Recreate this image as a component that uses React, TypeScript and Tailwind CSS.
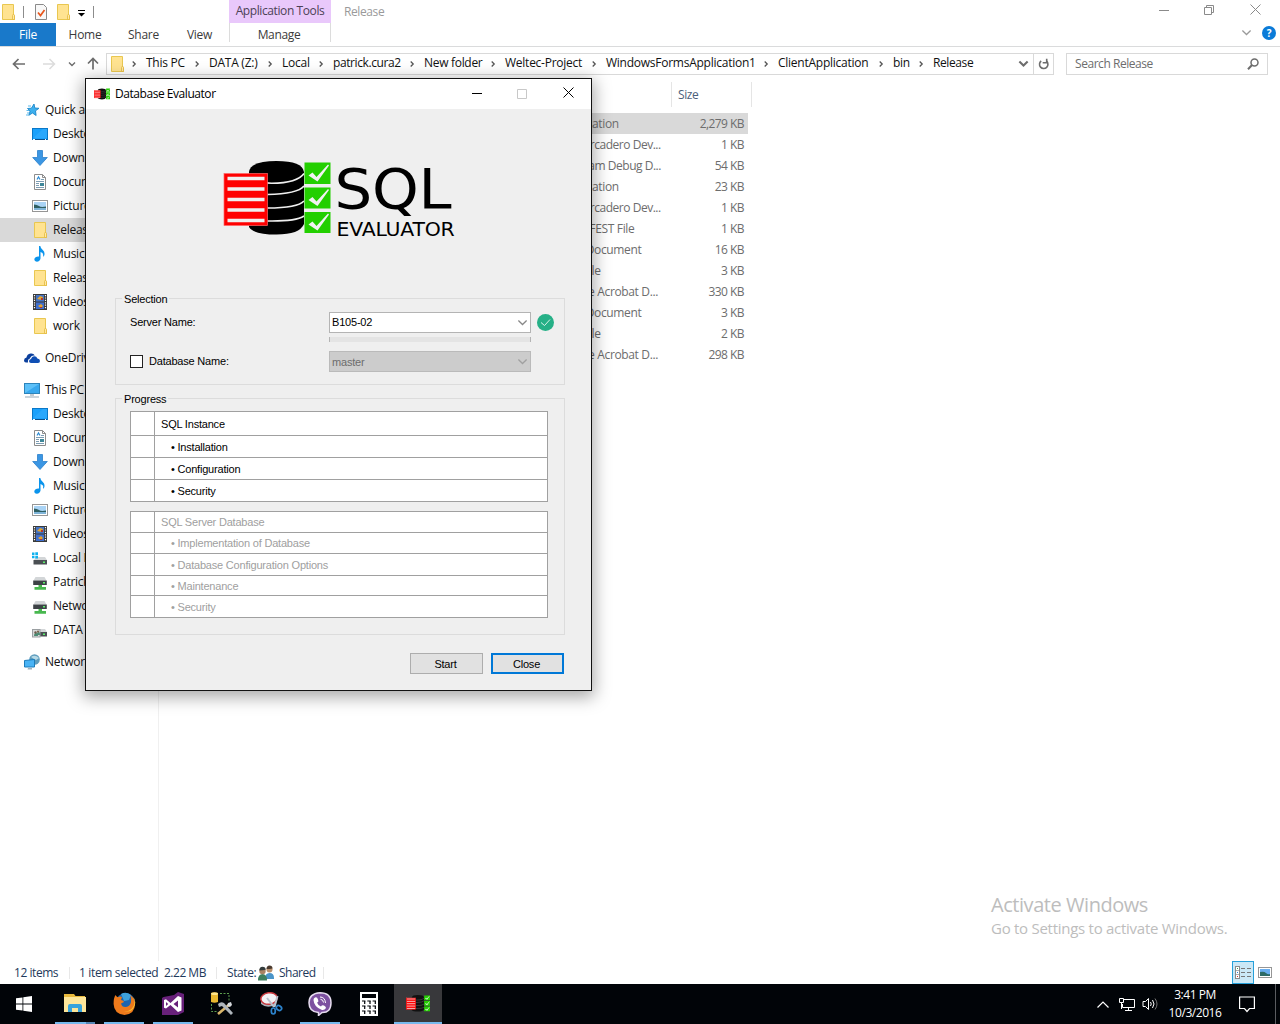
import React from "react";

type IconProps = { className?: string };

function Folder({ className = "" }: IconProps) {
  return (
    <svg className={"shrink-0 " + className} width="16" height="18" viewBox="0 0 16 18">
      <path d="M2.500 1.500h11v10l1 1v4h-12z" fill="#ffe391" stroke="#e9c750" />
      <path d="M12.500 16.500v-4l1-1.500 1 1.500v4z" fill="#ffe9a6" stroke="#e3b93c" strokeWidth=".8" />
    </svg>
  );
}

function Star() {
  return (
    <svg width="16" height="16" viewBox="0 0 16 16">
      <path d="M10 2l.8 4 4.200.3-3.500 2.500.6 4.700-3.600-2.500-3.700 2.300 1.300-4.300L3.500 6.500l3.900-.3z" fill="#3db0ee" stroke="#1b87cb" strokeWidth=".9" />
      <path d="M4 4h3M2.500 8.500H5M3 11h2M2 13h2.500" stroke="#5db9ea" />
    </svg>
  );
}
function Desktop() {
  return (
    <svg width="16" height="16" viewBox="0 0 16 16">
      <rect x=".5" y="2.500" width="15" height="11" fill="#1ba1fb" stroke="#0a78c8" />
      <path d="M1 12L11 3h4v9z" fill="#3fb2ff" opacity=".45" />
      <path d="M1 13.500h14" stroke="#0b4f8c" />
      <path d="M1 13.500h2M13 13.500h1" stroke="#fff" />
    </svg>
  );
}
function Download() {
  return (
    <svg width="16" height="16" viewBox="0 0 16 16">
      <path d="M5.500.5h5v7h4.800L8 15.500.7 7.500h4.800z" fill="#3b96e3" stroke="#2b80cb" strokeWidth=".8" />
    </svg>
  );
}
function Doc() {
  return (
    <svg width="16" height="16" viewBox="0 0 16 16">
      <path d="M2.500.5h8l3 3v12h-11z" fill="#fff" stroke="#8c8c8c" />
      <path d="M10.500.5v3h3" fill="none" stroke="#8c8c8c" />
      <path d="M5 5.500l1.500-2.500L8 5.500" fill="none" stroke="#2a8ad4" strokeWidth="1.200" />
      <path d="M9 5.500h3M4 7.500h8M4 9.500h3M4 11.500h3M4 13.500h8" stroke="#7d9db3" />
      <rect x="8" y="9" width="4" height="3" fill="#3f8799" />
    </svg>
  );
}
function Picture() {
  return (
    <svg width="16" height="16" viewBox="0 0 16 16">
      <rect x=".5" y="2.500" width="15" height="11" fill="#fff" stroke="#969696" />
      <rect x="2" y="4" width="12" height="8" fill="#a9d3f5" />
      <path d="M2 6.500q3 0 5 1.500t7 .5v1.500H2z" fill="#2f5f62" />
      <path d="M2 10h12v2H2z" fill="#7fb4d8" />
    </svg>
  );
}
function Music() {
  return (
    <svg width="16" height="16" viewBox="0 0 16 16">
      <path d="M7 0h1.300q.3 2.500 2.700 4.300 2.600 2.400.8 6.200l-.8-.3q1-3.200-2.500-4.200V12.500q-.5 3-3.700 3.200-2.600-.2-2.500-2.500.8-3 4.700-2.700z" fill="#0b94ec" />
    </svg>
  );
}
function Video() {
  return (
    <svg width="16" height="16" viewBox="0 0 16 16">
      <rect x="1" y="0" width="14" height="16" fill="#3a3a3a" />
      <path d="M2.500 1v14M13.500 1v14" stroke="#fff" strokeWidth="1.200" strokeDasharray="1.200 1.200" />
      <rect x="4" y="1" width="8" height="6.500" fill="#4474c4" />
      <rect x="4" y="8.500" width="8" height="6.500" fill="#3f6fd0" />
      <path d="M5 5l3-3 3 1-1 3zM6 12l3-2 2 2-2 2z" fill="#e5a52c" />
      <path d="M9 4h2v2H9zM8 13h2v1H8z" fill="#b5382c" />
    </svg>
  );
}
function OneDrive() {
  return (
    <svg width="16" height="16" viewBox="0 0 16 16">
      <path d="M0 10.500Q0 8 2.500 7.500 3 4 6.500 3.500 9.500 3 10.800 5.500 7 5 6 8.500 3.500 9 4 12.500H2Q0 12.300 0 10.500z" fill="#0b3f9c" />
      <path d="M5 11.300Q5 9.300 7 9q.8-3 3.500-2.700 2 0 2.900 2.200 2.600.4 2.600 2.400T14 13H7q-1.900 0-2-1.700z" fill="#0f4fb4" />
    </svg>
  );
}
function Monitor() {
  return (
    <svg width="16" height="16" viewBox="0 0 16 16">
      <rect x=".5" y="1.500" width="15" height="10" fill="#5cc0f8" stroke="#2c84bb" />
      <path d="M1 11L15 2v9z" fill="#38a8ee" />
      <path d="M6 12h4v2H6z" fill="#c3ccd2" />
      <path d="M1 15h14" stroke="#94a9b8" />
    </svg>
  );
}
function Drive({ kind }: { kind: "local" | "net" | "share" }) {
  return (
    <svg width="16" height="16" viewBox="0 0 16 16">
      {kind === "net" ? (
        <>
          <path d="M3.500 3h9l2 3.500h-13z" fill="#d3d6d8" />
          <rect x="1.200" y="6.500" width="13.600" height="4.500" fill="#3d4246" />
          <rect x="11" y="8" width="2" height="1.500" fill="#5cf06c" />
          <path d="M6.500 11h3.500v2h4v2.800H2.500V13h4z" fill="#48b84f" />
        </>
      ) : (
        <>
          <path d="M4 7h9l2 3H2z" fill="#d3d6d8" />
          <rect x="1.500" y="10" width="13.500" height="4.500" fill="#4a4f53" />
          <rect x="11" y="11.500" width="2" height="1.500" fill="#5cf06c" />
          {kind === "local" ? (
            <path d="M0 2.500h2.500V5H0zM3.300 2.200h2.700v2.800h-2.700zM0 5.800h2.500v2.500H0zM3.300 5.800h2.700v2.700h-2.700z" fill="#10b1ee" />
          ) : (
            <>
              <rect x=".5" y="7.500" width="7.500" height="7.500" fill="#d7d9da" stroke="#9a9fa2" />
              <path d="M2 14q0-3 2-3t2 3zM5 13q0-3 1.500-3T8 13z" fill="#4b8a72" />
              <circle cx="3.500" cy="10.500" r="1.200" fill="#6b5a4a" />
              <circle cx="6" cy="9.600" r="1.100" fill="#7c6550" />
            </>
          )}
        </>
      )}
    </svg>
  );
}
function Network() {
  return (
    <svg width="16" height="16" viewBox="0 0 16 16">
      <circle cx="10.500" cy="5.500" r="5.300" fill="#5f9dbd" />
      <path d="M7 3q4-3 8 1l-3 2-2-1z" fill="#b6d9e6" />
      <path d="M.5 6.500l10-1v7.500H.5z" fill="#49b3f5" stroke="#1d7cba" />
      <path d="M4 14h4v1.500H3.500z" fill="#9fb2bd" />
    </svg>
  );
}

function Logo({ mini = false }: { mini?: boolean }) {
  return (
    <g>
      <path d="M25.500 11Q27 0 53 0T80.500 11V63Q76 73.500 53 73.500T25.500 66z" fill={mini ? "#111" : "#000"} />
      <g fill="none" stroke="#efefef" strokeWidth={mini ? 0.8 : 1.600}>
        <path d="M25.500 14Q33 22 48 22.300 74 22 80.500 12.500" />
        <path d="M44 33.500Q74 33 80.500 25" />
        <path d="M44 47Q74 47 80.500 40" />
        <path d="M44 60Q72 60.500 80.500 55" />
      </g>
      <rect x=".5" y="12.500" width="43.500" height="52" fill="#f00" stroke="#f66" strokeWidth=".7" />
      <path d="M4 17.500h37M4 28h37M4 38.500h37M4 49h37M4 59.500h37" stroke="#efefef" strokeWidth="3.400" />
      <path d="M81 1.500h26v21.500h-26zM81 26.500h26v21h-26zM81 51h26v21h-26z" fill="#23cf00" />
      <g fill="#f2f2f2">
        <path d="M85 14.500l4-3 4 4.500L104.500 3.500l1 1L94 20.500z" />
        <path d="M85 39l4-3 4 4.500L104.500 28l1 1L94 45z" />
        <path d="M85 63.500l4-3 4 4.500L104.500 52.500l1 1L94 69.500z" />
      </g>
    </g>
  );
}

function Chevron({ className = "", w = 8, sw = 1.200, dir = "down" }: { className?: string; w?: number; sw?: number; dir?: "down" | "right" }) {
  const d = dir === "down" ? "M1 2.500l3 3 3-3" : "M2.700 1.500L5.200 4 2.700 6.500";
  return (
    <svg className={"shrink-0 " + className} width={w} height={w} viewBox="0 0 8 8">
      <path d={d} fill="none" stroke="currentColor" strokeWidth={sw} />
    </svg>
  );
}

const crumbs: [string, string][] = [
  ["This PC", "w-[40px]"],
  ["DATA (Z:)", "w-[50px]"],
  ["Local", "w-[28px]"],
  ["patrick.cura2", "w-[68px] tracking-[-0.4px]"],
  ["New folder", "w-[58px] tracking-[-0.3px]"],
  ["Weltec-Project", "w-[78px]"],
  ["WindowsFormsApplication1", "w-[149px]"],
  ["ClientApplication", "w-[92px]"],
  ["bin", "w-[17px]"],
  ["Release", "w-[40px] tracking-[-0.4px]"],
];

function Ribbon() {
  return (
    <header className="h-[47px] shrink-0 border-b border-[#dadbdc] flex">
      <div className="w-[229px] flex flex-col">
        <div className="h-[23px] flex items-center">
          <Folder className="mr-[6px]" />
          <span className="w-px h-3 bg-[#8c8c8c] ml-[1px] mr-[10px]" />
          <svg width="14" height="17" viewBox="0 0 14 17" className="mt-px">
            <path d="M1.500.5h8l3 3v12h-11z" fill="#f8f8f8" stroke="#8a8a8a" />
            <path d="M4 8.500l2.500 3L10.500 6" fill="none" stroke="#e8561c" strokeWidth="1.700" />
          </svg>
          <Folder className="ml-[7px]" />
          <svg width="9" height="7" viewBox="0 0 9 7" className="ml-[6px] mt-[3px]"><path d="M1 .5h7" stroke="#000" /><path d="M1 3h7L4.500 6.500z" /></svg>
          <span className="w-px h-3 bg-[#8c8c8c] ml-[7px]" />
        </div>
        <nav className="flex h-[23px] leading-[24px] text-[#3b3b3b]">
          <span className="w-14 text-center bg-[#1979ca] text-white">File</span>
          <span className="w-[58px] text-center">Home</span>
          <span className="w-[59px] text-center">Share</span>
          <span className="w-[53px] text-center">View</span>
        </nav>
      </div>
      <div className="w-[102px] flex flex-col text-center text-[#3b3b3b]">
        <div className="h-[23px] leading-[21px] bg-[#e9c8fb] text-[#4c4256] whitespace-nowrap tracking-[-0.4px]">Application Tools</div>
        <div className="h-[19px] leading-[24px] border-x border-[#dcdcdc] pr-0.5 tracking-[-0.35px]">Manage</div>
      </div>
      <div className="pl-[13px] leading-[24px] h-[23px] text-[#9a9a9a] tracking-[-0.4px]">Release</div>
      <div className="ml-auto flex flex-col">
        <div className="flex h-[20px] items-center text-[#8a8a8a]">
          <svg width="10" height="10" viewBox="0 0 10 10" className="mr-[35px]"><path d="M0 5.500h10" stroke="currentColor" /></svg>
          <svg width="10" height="10" viewBox="0 0 10 10" className="mr-[36px]" fill="none" stroke="currentColor"><path d="M.5 2.500h7v7h-7zM2.500 2.500v-2h7v7h-2" /></svg>
          <svg width="11" height="11" viewBox="0 0 11 11" className="mr-[19px]" stroke="currentColor"><path d="M.5.5l10 10M10.500.5l-10 10" /></svg>
        </div>
        <div className="flex h-7 items-center justify-end pr-1">
          <Chevron w={11} sw={0.9} className="text-[#9a9a9a] mr-[10px]" />
          <span className="size-[14px] rounded-full bg-[#0b7bd8] text-white text-[10px] font-bold leading-[14px] text-center">?</span>
        </div>
      </div>
    </header>
  );
}

function AddressBar() {
  return (
    <div className="h-[33px] shrink-0 flex items-center">
      <svg width="14" height="12" viewBox="0 0 14 12" className="ml-[12px]" fill="none" stroke="#6d6d6d" strokeWidth="1.700"><path d="M13 6H2M6.500 1L1.500 6l5 5" /></svg>
      <svg width="14" height="12" viewBox="0 0 14 12" className="ml-[16px]" fill="none" stroke="#dcdcdc" strokeWidth="1.500"><path d="M1 6h11M7.500 1l5 5-5 5" /></svg>
      <Chevron w={8} className="ml-[12px] mr-px text-[#6d6d6d]" sw={1.400} />
      <svg width="12" height="13" viewBox="0 0 12 13" className="ml-[10px]" fill="none" stroke="#6d6d6d" strokeWidth="1.700"><path d="M6 12.500V2M1 6.500l5-5 5 5" /></svg>
      <div className="ml-[7px] w-[948px] h-[22px] border border-[#d9d9d9] flex items-center text-[#111]">
        <Folder className="ml-[2px] -mr-[2px]" />
        {crumbs.map(([t, w]) => (
          <React.Fragment key={t}>
            <Chevron dir="right" className="ml-[7px] mr-[8px] text-[#555]" sw={1.300} />
            <span className={w + " whitespace-nowrap leading-[18px] -mt-px"}>{t}</span>
          </React.Fragment>
        ))}
        <Chevron w={11} sw={1.500} className="ml-auto mr-[4px] text-[#6d6d6d]" />
        <div className="w-5 h-full border-l border-[#d9d9d9] flex items-center justify-center">
          <svg width="12" height="12" viewBox="0 0 12 12" fill="none" stroke="#6d6d6d" strokeWidth="1.600"><path d="M8.500 3.200A4.200 4.200 0 1 1 3.200 3" /><path d="M5 5h4V1" transform="translate(-.3 -.2)" /></svg>
        </div>
      </div>
      <div className="ml-[12px] w-[202px] h-[22px] border border-[#d9d9d9] flex items-center justify-between pl-2 pr-2 text-[#6d6d6d]">
        <span className="tracking-[-0.45px]">Search Release</span>
        <svg width="12" height="12" viewBox="0 0 12 12" fill="none" stroke="#6d6d6d"><circle cx="7.500" cy="4.500" r="3.500" strokeWidth="1.500" /><path d="M5 7L1 11.200" strokeWidth="2" /></svg>
      </div>
    </div>
  );
}

type Item = { t: string; i: React.ReactNode; sub?: boolean; sel?: boolean };
const groups: Item[][] = [
  [
    { t: "Quick access", i: <Star /> },
    { t: "Desktop", i: <Desktop />, sub: true },
    { t: "Downloads", i: <Download />, sub: true },
    { t: "Documents", i: <Doc />, sub: true },
    { t: "Pictures", i: <Picture />, sub: true },
    { t: "Release", i: <Folder />, sub: true, sel: true },
    { t: "Music", i: <Music />, sub: true },
    { t: "Release", i: <Folder />, sub: true },
    { t: "Videos", i: <Video />, sub: true },
    { t: "work", i: <Folder />, sub: true },
  ],
  [{ t: "OneDrive", i: <OneDrive /> }],
  [
    { t: "This PC", i: <Monitor /> },
    { t: "Desktop", i: <Desktop />, sub: true },
    { t: "Documents", i: <Doc />, sub: true },
    { t: "Downloads", i: <Download />, sub: true },
    { t: "Music", i: <Music />, sub: true },
    { t: "Pictures", i: <Picture />, sub: true },
    { t: "Videos", i: <Video />, sub: true },
    { t: "Local Disk", i: <Drive kind="local" />, sub: true },
    { t: "Patrick", i: <Drive kind="net" />, sub: true },
    { t: "Network", i: <Drive kind="net" />, sub: true },
    { t: "DATA (Z:)", i: <Drive kind="share" />, sub: true },
  ],
  [{ t: "Network", i: <Network /> }],
];

function Sidebar() {
  return (
    <aside className="w-[159px] border-r border-[#f0f0f0] pt-[18px] flex flex-col gap-2 text-[#111]">
      {groups.map((g, k) => (
        <div key={k}>
          {g.map((it, j) => (
            <div
              key={j}
              className={"h-6 flex items-center gap-[5px] leading-6 " + (it.sub ? "pl-8 " : "pl-6 ") + (it.sel ? "bg-[#d9d9d9]" : "")}
            >
              {it.i}
              <span className="whitespace-nowrap">{it.t}</span>
            </div>
          ))}
        </div>
      ))}
    </aside>
  );
}

const files: [string, string][] = [
  ["Application", "2,279 KB"],
  ["Embarcadero Dev...", "1 KB"],
  ["Program Debug D...", "54 KB"],
  ["Application", "23 KB"],
  ["Embarcadero Dev...", "1 KB"],
  ["MANIFEST File", "1 KB"],
  ["XML Document", "16 KB"],
  ["DLL File", "3 KB"],
  ["Adobe Acrobat D...", "330 KB"],
  ["XML Document", "3 KB"],
  ["DLL File", "2 KB"],
  ["Adobe Acrobat D...", "298 KB"],
];

function FileList() {
  return (
    <main className="w-[593px] pt-[2px] text-[#6d6d6d]">
      <div className="h-[25px] flex justify-end">
        <div className="w-[81px] border-x border-[#e5e5e5] pl-[6px] leading-[26px] text-[#4c607a] tracking-[-0.4px]">Size</div>
      </div>
      <div className="mt-[6px] w-[589px]">
        {files.map(([t, s], i) => (
          <div key={i} className={"h-[21px] leading-[22px] flex justify-between pl-[401px] pr-1 whitespace-nowrap " + (i === 0 ? "bg-[#d9d9d9]" : "")}>
            <span className={t.startsWith("Emb") || t.startsWith("Prog") ? "tracking-[-0.48px]" : "tracking-[-0.35px]"}>{t}</span>
            <span className="tracking-[-0.55px]">{s}</span>
          </div>
        ))}
      </div>
    </main>
  );
}

function StatusBar() {
  return (
    <footer className="h-[23px] shrink-0 flex items-center text-[#1e395b] whitespace-nowrap">
      <span className="ml-[14px] w-[55px] tracking-[-0.45px]">12 items</span>
      <span className="w-px h-3 bg-[#e8e8e8]" />
      <span className="ml-[9px] w-[85px] tracking-[-0.35px]">1 item selected</span>
      <span className="w-[52px] tracking-[-0.5px]">2.22 MB</span>
      <span className="w-px h-3 bg-[#e8e8e8]" />
      <span className="ml-[10px] w-[31px] tracking-[-0.4px]">State:</span>
      <svg width="16" height="16" viewBox="0 0 16 16">
        <path d="M7 14q0-6 4.500-6T16 13v1z" fill="#4a94c8" />
        <circle cx="11.500" cy="4.500" r="3" fill="#b98f6c" /><path d="M8.500 4q0-3.500 3-3.500t3 3q-3 .5-6 .5" fill="#4a3a2e" />
        <path d="M0 15.500q0-6.500 4.500-6.500T9 15.500z" fill="#3f7f5e" />
        <circle cx="4.500" cy="6" r="3.200" fill="#a98263" /><path d="M1.300 5.500q0-3.800 3.200-3.800t3.200 3q-3 .8-6.400.8" fill="#333c3c" />
      </svg>
      <span className="ml-[5px] w-[44px] tracking-[-0.5px]">Shared</span>
      <span className="w-px h-3 bg-[#e8e8e8]" />
      <div className="ml-auto flex items-center pr-[8px] gap-1">
        <div className="w-[22px] h-[23px] border border-[#26a0da] bg-[#cbe8f6] flex items-center justify-center">
          <svg width="17" height="13" viewBox="0 0 17 13" fill="none" className="shrink-0">
            <rect x=".5" y=".5" width="4" height="12" fill="#fff" stroke="#8a8a8a" />
            <path d="M0 4.500h5M0 8.500h5" stroke="#8a8a8a" strokeWidth=".7" />
            <path d="M2 2.500h1" stroke="#3aa357" /><path d="M2 6.500h1" stroke="#2f7fd6" /><path d="M2 10.500h1" stroke="#d33" />
            <path d="M6 2.500h4M12 2.500h4M6 6.500h4M12 6.500h4M6 10.500h4M12 10.500h4" stroke="#777" />
          </svg>
        </div>
        <svg width="14" height="11" viewBox="0 0 14 11"><rect x=".5" y=".5" width="13" height="10" fill="#fff" stroke="#969696" /><rect x="2" y="2" width="10" height="7" fill="#69aef0" /><path d="M2 5q4-1 6 1t4 1v2H2z" fill="#2d6b66" /></svg>
      </div>
    </footer>
  );
}

function Task({ children, w = "w-10", line = true, className = "" }: { children: React.ReactNode; w?: string; line?: boolean; className?: string }) {
  return (
    <div className={"h-full flex flex-col items-center " + w + " " + className}>
      <div className="flex-1 pt-px flex items-center">{children}</div>
      <div className={"h-0.5 w-full " + (line ? "bg-[#76b9ed]" : "")} />
    </div>
  );
}

function Taskbar() {
  return (
    <div className="h-10 shrink-0 bg-[#010408] flex text-white">
      <Task w="w-12" line={false}>
        <svg width="16" height="16" viewBox="0 0 16 16" fill="#fff"><path d="M0 2.300l6.500-.9v6.200H0zM7.300 1.300L16 0v7.600H7.300zM0 8.400h6.500v6.200L0 13.700zM7.300 8.400H16V16l-8.700-1.200z" /></svg>
      </Task>
      <div className="ml-[7px] w-10 h-full flex flex-col">
        <div className="flex-1 flex items-center justify-center">
          <svg width="22" height="20" viewBox="0 0 22 20">
            <path d="M0 1h10l1.500 2H21v3H0z" fill="#e8b93c" /><rect y="4" width="22" height="15" fill="#fde69a" />
            <path d="M4 19v-6q0-2 2-2h10q2 0 2 2v6h-4v-4H8v4z" fill="#36a3dc" />
          </svg>
        </div>
        <div className="flex h-0.5"><span className="w-[31px] bg-[#76b9ed]" /><span className="flex-1 bg-[#5586b5]" /></div>
      </div>
      <Task className="ml-[9px]">
        <svg width="23" height="23" viewBox="0 0 23 23">
          <circle cx="12.500" cy="10.500" r="9.500" fill="#1c64ad" /><path d="M8 2q5-3 10 1l-2 5-5 1z" fill="#3ea2dc" />
          <path d="M2.500 3q1 2 2.500 2.200Q7 4 9 5l-1 3q3 .5 3 2l-3 1.500q1 4 5 3.500 4-.5 5-5 1-4-1-7 5 3 5 9 0 10-10.500 11Q1 22 .6 12 .5 6 2.500 3z" fill="#ee7a1b" />
          <path d="M20 5q3 5 0 10-3 5-9 4 7 2 10-4t-1-10z" fill="#fbc52e" />
        </svg>
      </Task>
      <Task className="ml-[9px]">
        <svg width="22" height="23" viewBox="0 0 22 23">
          <path d="M0 6l1.500-1L12 3l4-3 6 2v18l-6 3H0z" fill="#68217a" />
          <path d="M2 8l2-.8 4.500 3.800L16 4l3.500 1.500v13L16 20l-7.500-7L4 16.500 2 15.700zM4 10v4l2.200-2zM16 8.500L11.500 12l4.500 3.500z" fill="#fff" fillRule="evenodd" />
        </svg>
      </Task>
      <Task className="ml-[9px]" line={false}>
        <svg width="24" height="24" viewBox="0 0 24 24">
          <path d="M10 1.500h9v8M1.500 12v7.500H8" fill="none" stroke="#5c9f4e" strokeDasharray="2 1.500" />
          <path d="M1 1q3.500-1.500 7 0v9q-3.500 1.500-7 0z" fill="#e9b72f" /><ellipse cx="4.500" cy="1.800" rx="3.500" ry="1.200" fill="#ffe58d" />
          <path d="M8 22L20 12" stroke="#d9b66b" strokeWidth="2.600" /><path d="M8 12q3-3 6-1l9 10-2 2-9-9-3 1z" fill="#aeb5bb" /><path d="M18 11l3-1 1 3-2 2-3-1z" fill="#d4d8db" />
        </svg>
      </Task>
      <Task className="ml-[9px]" line={false}>
        <svg width="23" height="23" viewBox="0 0 23 23">
          <path d="M1 8v4q6 5 14 1l2-5z" fill="#a9aeb6" />
          <ellipse cx="9" cy="6.500" rx="8.200" ry="5.700" fill="#f2f2f4" stroke="#c6363b" strokeWidth="1.500" transform="rotate(-8 9 6.500)" />
          <path d="M7 6l7 9M17.500 4l-3 11" stroke="#b9c2cc" strokeWidth="2" />
          <ellipse cx="13.300" cy="19" rx="2" ry="3" fill="none" stroke="#2c83cc" strokeWidth="1.700" /><ellipse cx="19" cy="16" rx="2.800" ry="2.200" fill="none" stroke="#2c83cc" strokeWidth="1.700" transform="rotate(35 19 16)" />
        </svg>
      </Task>
      <Task className="ml-[9px]">
        <svg width="24" height="24" viewBox="0 0 24 24">
          <path d="M12 .8q11 0 11 10T14 20.500l-3.500 3v-3Q1 20 1 10.800T12 .8z" fill="#7d51a0" stroke="#e6dcef" strokeWidth="1.500" />
          <path d="M7 5.500q2-1 3 2t-1 3q1 3 4 4 1-2 3-1t2 2.500q-2 3-5 1.500-7-3-7.500-9.500 0-2 1.500-2.500z" fill="#fff" />
          <path d="M12 5q5 0 5.500 6M12.500 7.300q2.800.3 3 3.200" fill="none" stroke="#fff" />
        </svg>
      </Task>
      <Task className="ml-[9px]" line={false}>
        <svg width="18" height="24" viewBox="0 0 18 24">
          <rect width="18" height="24" fill="#fff" /><rect x="2" y="2" width="14" height="4" fill="#010408" />
          <path d="M2 9h14M2 14h14M2 19h14" stroke="#010408" strokeWidth="1.200" strokeDasharray="3.400 1.900" />
          <path d="M4.700 9v3M10 9v3M15.300 9v3M4.700 14v3M10 14v3M15.300 14v3M4.700 19v3M10 19v3M15.300 19v3" stroke="#010408" strokeWidth="1.200" />
        </svg>
      </Task>
      <Task className="ml-[5px] bg-[#38383b]" w="w-12">
        <svg width="24" height="17" viewBox="0 0 107 75"><Logo mini /></svg>
      </Task>
      <div className="ml-auto flex items-center">
        <svg width="12" height="7" viewBox="0 0 12 7" fill="none" stroke="#fff" strokeWidth="1.200"><path d="M.5 6.500L6 1l5.500 5.500" /></svg>
        <svg width="17" height="15" viewBox="0 0 17 15" className="ml-[10px]" fill="none" stroke="#fff"><path d="M5 2.500h10.500v8H3.500V7M9.500 10.500v3M6 13.500h7" /><path d="M.5 1.500h4v4h-4zM2.500 5.500v6.500" /></svg>
        <svg width="17" height="14" viewBox="0 0 17 14" className="ml-[6px]" fill="none" stroke="#fff"><path d="M1 4.500h2.500L6.500 1.500v11L3.500 9.500H1z" /><path d="M8.500 5q1.500 2 0 4M10.500 3q3 4 0 8" /><path d="M13 1.500q4 5.500 0 11" stroke="#777" /></svg>
        <div className="ml-[8px] w-[56px] text-center leading-[18px] whitespace-nowrap tracking-[-0.45px]">
          <div>3:41 PM</div>
          <div>10/3/2016</div>
        </div>
        <svg width="16" height="17" viewBox="0 0 16 17" className="ml-[16px]" fill="none" stroke="#fff" strokeWidth="1.200"><path d="M.6 1h14.800v11.500H10.500L8 15.500l-2.500-3H.6z" /></svg>
        <span className="ml-[20px] w-px h-10 bg-[#5a5c60] mr-1" />
      </div>
    </div>
  );
}

function Group({ title, className = "", children }: { title: string; className?: string; children: React.ReactNode }) {
  return (
    <section className={"relative ml-[29px] mr-[26px] border border-[#dcdcdc] " + className}>
      <h2 className="absolute left-[6px] -top-2 px-[2px] bg-[#efefef] leading-4">{title}</h2>
      {children}
    </section>
  );
}

function Grid({ rows, className = "" }: { rows: [string, string][]; className?: string }) {
  return (
    <div className={"w-[418px] border-t border-x border-[#a0a0a0] bg-white " + className}>
      {rows.map(([t, h], i) => (
        <div key={i} className={"flex items-center border-b border-[#a0a0a0] " + h}>
          <span className="w-6 self-stretch border-r border-[#a0a0a0]" />
          <span className={"pt-px " + (i ? "pl-4" : "pl-[6px]")}>{i ? "• " + t : t}</span>
        </div>
      ))}
    </div>
  );
}

function Dialog() {
  return (
    <div className="absolute left-[85px] top-[78px] w-[507px] h-[613px] border border-[#111] bg-[#efefef] shadow-[0_4px_16px_2px_rgba(0,0,0,0.35)] flex flex-col font-['Liberation_Sans',sans-serif] text-[11px] tracking-[-0.2px] text-black">
      <div className="h-[30px] shrink-0 bg-white flex items-center pl-2 font-['Open_Sans',sans-serif] text-[12px] tracking-[-0.45px]">
        <svg width="16" height="12" viewBox="0 0 107 75"><Logo mini /></svg>
        <span className="ml-[5px]">Database Evaluator</span>
        <svg width="11" height="10" viewBox="0 0 11 10" className="ml-auto mr-[34px]"><path d="M0 4.500h10" stroke="#000" /></svg>
        <svg width="10" height="10" viewBox="0 0 10 10" className="mr-[36px] mb-px"><path d="M.5.5h9v9h-9z" fill="none" stroke="#c8c8c8" /></svg>
        <svg width="11" height="11" viewBox="0 0 11 11" className="mr-[17px] mb-[3px]" stroke="#000"><path d="M.5.5l10 10M10.500.5l-10 10" /></svg>
      </div>
      <svg width="240" height="90" viewBox="0 0 240 90" className="ml-[137px] mt-[52px] shrink-0">
        <g transform="translate(0.5 0)"><Logo /></g>
        <text x="111.500" y="46.500" fontFamily="DejaVu Sans" fontSize="55" textLength="117" lengthAdjust="spacingAndGlyphs">SQL</text>
        <text x="113.500" y="74.500" fontFamily="DejaVu Sans" fontSize="19.300" textLength="118" lengthAdjust="spacingAndGlyphs">EVALUATOR</text>
      </svg>
      <Group title="Selection" className="mt-[47px] h-[87px] shrink-0">
        <div className="flex items-center mt-[13px] pl-[14px] h-[21px]">
          <span className="w-[199px]">Server Name:</span>
          <div className="w-[202px] h-[21px] border border-[#b4b4b4] bg-white flex items-center pl-[2px]">
            B105-02
            <Chevron w={11} sw={0.9} className="ml-auto mr-[2px] text-[#888]" />
          </div>
          <svg width="17" height="17" viewBox="0 0 17 17" className="ml-[6px] -mt-px"><circle cx="8.500" cy="8.500" r="8.500" fill="#26b087" /><path d="M4 8.500L7.500 11.500l5.500-6" fill="none" stroke="#d8f3ea" /></svg>
        </div>
        <div className="ml-[213px] mt-1 w-[202px] h-[5px] bg-[#e4e4e4] border-x border-[#b4b4b4]" />
        <div className="flex items-center mt-[9px] pl-[14px] h-[21px]">
          <span className="size-[13px] border border-[#222] bg-white -mt-px" />
          <span className="ml-[6px] w-[180px]">Database Name:</span>
          <div className="w-[202px] h-[21px] border border-[#bababa] bg-[#cccccc] text-[#6d6d6d] flex items-center pl-[2px]">
            <span className="pt-px">master</span>
            <Chevron w={11} sw={0.9} className="ml-auto mr-[2px] text-[#a0a0a0]" />
          </div>
        </div>
      </Group>
      <Group title="Progress" className="mt-[13px] h-[237px] shrink-0">
        <Grid
          className="ml-[14px] mt-[12px]"
          rows={[["SQL Instance", "h-6"], ["Installation", "h-[22px]"], ["Configuration", "h-[22px]"], ["Security", "h-[22px]"]]}
        />
        <Grid
          className="ml-[14px] mt-[9px] text-[#a0a0a0]"
          rows={[["SQL Server Database", "h-[21px]"], ["Implementation of Database", "h-[21px]"], ["Database Configuration Options", "h-[22px]"], ["Maintenance", "h-5"], ["Security", "h-[22px]"]]}
        />
      </Group>
      <div className="flex justify-end gap-2 pr-[27px] mt-[18px]">
        <button className="w-[73px] h-[21px] border border-[#adadad] bg-[#e1e1e1] pr-0.5 pt-px">Start</button>
        <button className="w-[73px] h-[21px] border-2 border-[#0078d7] bg-[#e1e1e1] pr-0.5 pt-px">Close</button>
      </div>
    </div>
  );
}

export default function App() {
  return (
    <div className="relative w-[1280px] h-[1024px] bg-white flex flex-col overflow-hidden font-['Open_Sans',sans-serif] text-[12px] tracking-[-0.25px]">
      <Ribbon />
      <AddressBar />
      <div className="flex-1 min-h-0 flex">
        <Sidebar />
        <FileList />
      </div>
      <StatusBar />
      <Taskbar />
      <div className="absolute left-[991px] top-[892px] text-[#bdbdbd] whitespace-nowrap">
        <div className="text-[20px] leading-[26px] tracking-[-0.45px]">Activate Windows</div>
        <div className="text-[15px] leading-[20px] tracking-[-0.27px]">Go to Settings to activate Windows.</div>
      </div>
      <Dialog />
    </div>
  );
}
